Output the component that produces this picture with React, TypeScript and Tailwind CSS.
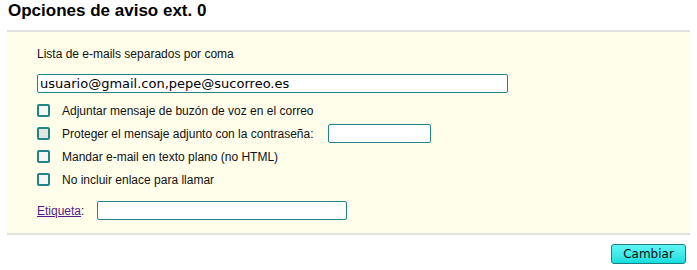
import { useState } from 'react';

const rows = [
  { label: 'Adjuntar mensaje de buzón de voz en el correo', gray: false, pass: false },
  { label: 'Proteger el mensaje adjunto con la contraseña:', gray: true, pass: true },
  { label: 'Mandar e-mail en texto plano (no HTML)', gray: false, pass: false },
  { label: 'No incluir enlace para llamar', gray: false, pass: false },
];

function Box({ gray }: { gray: boolean }) {
  return (
    <span
      className={`inline-block w-[13px] h-[13px] shrink-0 rounded-[2px] border-2 border-[#1f8585] ${
        gray ? 'bg-[#e4e4e4]' : 'bg-[#f6f6f6]'
      }`}
    />
  );
}

export default function App() {
  const [emails, setEmails] = useState('usuario@gmail.con,pepe@sucorreo.es');
  const [pass, setPass] = useState('');
  const [tag, setTag] = useState('');

  return (
    <div className="w-[697px] h-[270px] bg-white font-['DejaVu_Sans',sans-serif] text-black">
      <h1 className="h-[30px] pl-[8px] pt-[0px] text-[17px] leading-[21px] font-bold font-['Liberation_Sans',Arial,sans-serif]">
        Opciones de aviso ext. 0
      </h1>

      <div className="mx-[7px] bg-[#fefeeb] border-t-2 border-b-2 border-[#e2e2e0] pl-[30px] pt-[15px] pb-[13px] font-['Liberation_Sans',Arial,sans-serif] text-[12px] text-[#111]">
        <div className="leading-[14px]">Lista de e-mails separados por coma</div>

        <input
          value={emails}
          onChange={(e) => setEmails(e.target.value)}
          className="mt-[13px] block w-[471px] h-[19px] px-[2px] bg-white border border-[#1f8585] rounded-[2px] font-['DejaVu_Sans',sans-serif] text-[13px] leading-[17px] text-black outline-none"
        />

        <div className="mt-[6px]">
          {rows.map((r) => (
            <div key={r.label} className="h-[23px] flex items-center">
              <Box gray={r.gray} />
              <span className="ml-[12px]">{r.label}</span>
              {r.pass && (
                <input
                  type="text"
                  value={pass}
                  onChange={(e) => setPass(e.target.value)}
                  className="ml-[14px] w-[103px] h-[19px] bg-white border border-[#1f8585] rounded-[2px] outline-none"
                />
              )}
            </div>
          ))}
        </div>

        <div className="mt-[10px] flex items-center">
          <a href="#" className="text-[#551a8b] underline">
            Etiqueta
          </a>
          <span>:</span>
          <input
            value={tag}
            onChange={(e) => setTag(e.target.value)}
            className="ml-[13px] w-[250px] h-[19px] bg-white border border-[#1f8585] rounded-[2px] outline-none"
          />
        </div>
      </div>

      <div className="flex justify-end pr-[11px] pt-[9px]">
        <button className="w-[75px] h-[20px] rounded-[3px] border border-[#1b7f7f] bg-gradient-to-b from-[#5ef5f5] to-[#10dede] font-['DejaVu_Sans',sans-serif] text-[12px] leading-[16px] text-[#111]">
          Cambiar
        </button>
      </div>
    </div>
  );
}
